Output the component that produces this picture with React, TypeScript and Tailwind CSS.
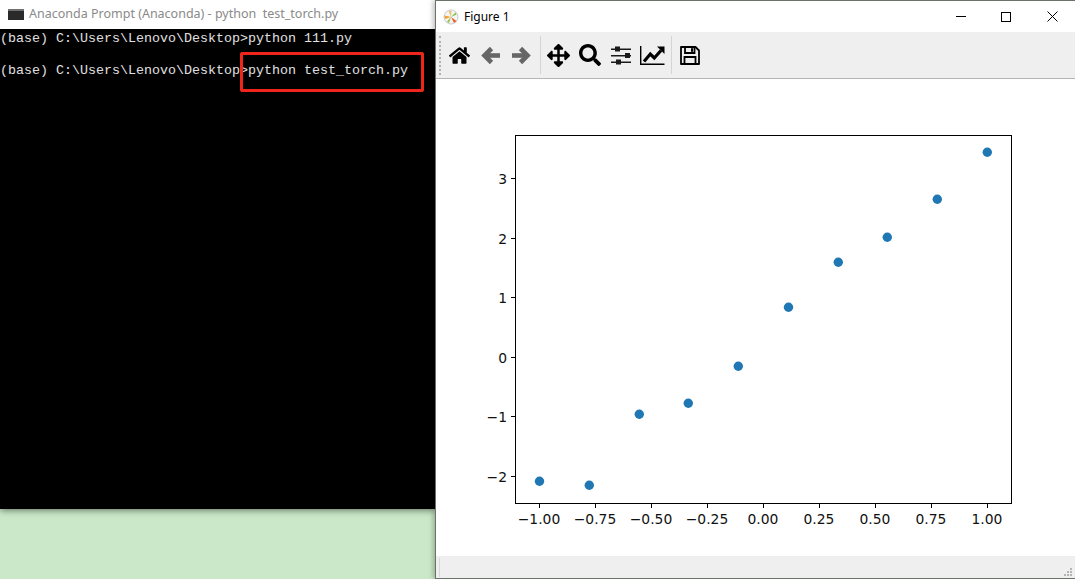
import { FaHome, FaArrowsAlt, FaSearch } from "react-icons/fa";

const xTicks = [
  { x: 539, label: "−1.00" },
  { x: 595, label: "−0.75" },
  { x: 651, label: "−0.50" },
  { x: 707, label: "−0.25" },
  { x: 763, label: "0.00" },
  { x: 819, label: "0.25" },
  { x: 875, label: "0.50" },
  { x: 931, label: "0.75" },
  { x: 987, label: "1.00" },
];

const yTicks = [
  { y: 178, label: "3" },
  { y: 238, label: "2" },
  { y: 297, label: "1" },
  { y: 357, label: "0" },
  { y: 416, label: "−1" },
  { y: 476, label: "−2" },
];

const points = [
  [539.5, 481.3],
  [589.3, 485.3],
  [639.3, 414.3],
  [688.3, 403.3],
  [738.3, 366.3],
  [788.5, 307.3],
  [838.3, 262.3],
  [887.3, 237.3],
  [937.3, 199.3],
  [987.3, 152.3],
];

function Plot() {
  // viewBox uses page coordinates so ticks read the same as the screenshot
  return (
    <svg width="639" height="477" viewBox="436 79 639 477" className="block">
      <rect x="515.5" y="135.5" width="496" height="368" fill="none" stroke="#000" strokeWidth="1" />
      {xTicks.map((t) => (
        <g key={t.label}>
          <line x1={t.x + 0.5} x2={t.x + 0.5} y1="503.5" y2="508" stroke="#000" />
          <text x={t.x} y="524" textAnchor="middle" fontSize="13.89" fontFamily="'DejaVu Sans', sans-serif" fill="#111">
            {t.label}
          </text>
        </g>
      ))}
      {yTicks.map((t) => (
        <g key={t.label}>
          <line x1="511" x2="515.5" y1={t.y + 0.5} y2={t.y + 0.5} stroke="#000" />
          <text x="507" y={t.y + 5.5} textAnchor="end" fontSize="13.89" fontFamily="'DejaVu Sans', sans-serif" fill="#111">
            {t.label}
          </text>
        </g>
      ))}
      {points.map(([x, y]) => (
        <circle key={x} cx={x} cy={y} r="4.7" fill="#1f77b4" />
      ))}
    </svg>
  );
}

function MplLogo() {
  return (
    <svg width="16" height="16" viewBox="0 0 16 16">
      <circle cx="8" cy="8" r="7" fill="#f4f4f4" stroke="#c9c9c9" />
      <path d="M8 8 L1.5 6.5 L2 10 Z" fill="#f2a02c" />
      <path d="M8 8 L5.5 2 L8.5 2 Z" fill="#e9c46a" />
      <path d="M8 8 L13.5 12 L11 14 Z" fill="#e8612a" />
      <path d="M8 8 L12.5 3.5 L13.5 5.5 Z" fill="#7cbf42" />
      <path d="M8 8 L6 14 L4 12.5 Z" fill="#9bbf4a" />
    </svg>
  );
}

function ArrowIcon({ flip }: { flip?: boolean }) {
  return (
    <svg width="20" height="19" viewBox="0 0 20 19" fill="none" stroke="#666" strokeWidth="4.6" className={flip ? "-scale-x-100" : ""}>
      <path d="M10.5 2.5 L3.5 9.5 L10.5 16.5" />
      <path d="M4 9.5 H19" />
    </svg>
  );
}

function SlidersIcon() {
  return (
    <svg width="20" height="19" viewBox="0 0 20 19" fill="#1a1a1a">
      <rect x="0" y="2.5" width="20" height="1.5" />
      <rect x="4" y="0.5" width="5" height="5" />
      <rect x="0" y="9" width="20" height="1.5" />
      <rect x="14" y="7" width="5" height="5" />
      <rect x="0" y="15.5" width="20" height="1.5" />
      <rect x="5" y="13.5" width="5" height="5" />
    </svg>
  );
}

function ChartIcon() {
  return (
    <svg width="25" height="19" viewBox="0 0 25 19" fill="none">
      <path d="M0.7 0 V18.2 H24.5" stroke="#000" strokeWidth="1.4" />
      <path d="M4 15.5 L10.3 8 L14.3 12 L21 4.5" stroke="#000" strokeWidth="3.2" />
      <path d="M17 0.5 H24.5 V8 Z" fill="#000" />
    </svg>
  );
}

function SaveIcon() {
  return (
    <svg width="20" height="19" viewBox="0 0 20 19" fill="none" stroke="#000" strokeWidth="1.8">
      <path d="M1 1 H15.5 L19 4.5 V18 H1 Z" strokeLinejoin="round" />
      <path d="M5 1 V7 H14.5 V1" />
      <path d="M4.5 18 V11 H15.5 V18" />
      <rect x="11" y="2.2" width="2" height="3.6" fill="#000" stroke="none" />
    </svg>
  );
}

function Separator() {
  return <div className="h-[38px] w-px bg-[#d4d4d4]" />;
}

export default function App() {
  return (
    <div className="relative h-[579px] w-[1075px] overflow-hidden bg-[#cbe9c9]">
      {/* console window */}
      <div className="absolute left-0 top-0 flex h-[509px] w-[436px] flex-col bg-black shadow-[0_1px_7px_rgba(0,0,0,0.55)]">
        <div className="flex h-[29px] shrink-0 items-center gap-[5px] bg-white pl-[8px]">
          <div className="h-[11px] w-[16px] border-t-2 border-[#707070] bg-[#2a2a2a]" />
          <span className="whitespace-pre font-['Noto_Sans',sans-serif] text-[12.5px] text-[#8a8a8a]">
            Anaconda Prompt (Anaconda) - python  test_torch.py
          </span>
        </div>
        <div className="whitespace-pre pt-[2px] font-['Liberation_Mono',monospace] text-[13.33px] leading-4 text-[#e0e0e0]">
          <div>{"(base) C:\\Users\\Lenovo\\Desktop>python 111.py"}</div>
          <div>{" "}</div>
          <div>{"(base) C:\\Users\\Lenovo\\Desktop>python test_torch.py"}</div>
        </div>
      </div>

      {/* annotation box */}
      <div className="absolute left-[240px] top-[52px] h-[40px] w-[184px] rounded-[2px] border-[3px] border-[#f0261c]" />

      {/* figure window */}
      <div className="absolute left-[435px] top-0 flex h-[579px] w-[640px] flex-col border-b border-l border-t border-[#6a726a] bg-white shadow-[-2px_0_5px_rgba(0,0,0,0.25)]">
        <div className="flex h-[31px] shrink-0 items-center bg-white pl-[7px]">
          <MplLogo />
          <span className="ml-[5px] font-['Noto_Sans',sans-serif] text-[12px] text-black">Figure 1</span>
          <div className="ml-auto flex items-center">
            <div className="mr-[35px] h-px w-[10px] bg-black" />
            <div className="mr-[36px] h-[10px] w-[10px] border border-black" />
            <svg width="11" height="11" viewBox="0 0 11 11" className="mr-[17px]" stroke="#000" strokeWidth="1">
              <path d="M0.5 0.5 L10.5 10.5 M10.5 0.5 L0.5 10.5" />
            </svg>
          </div>
        </div>

        <div className="flex h-[47px] shrink-0 items-center border-b border-[#b5b5b5] bg-[#efefef]">
          <div className="ml-[3px] h-[39px] w-[3px] border-l-2 border-dotted border-[#b0b0b0]" />
          <FaHome className="ml-[7px] text-black" size={21} />
          <div className="ml-[11px]">
            <ArrowIcon />
          </div>
          <div className="ml-[10px]">
            <ArrowIcon flip />
          </div>
          <div className="ml-[9px]">
            <Separator />
          </div>
          <FaArrowsAlt className="ml-[6px] text-black" size={23} />
          <FaSearch className="ml-[9px] text-black" size={22} />
          <div className="ml-[10px]">
            <SlidersIcon />
          </div>
          <div className="ml-[9px]">
            <ChartIcon />
          </div>
          <div className="ml-[6px]">
            <Separator />
          </div>
          <div className="ml-[8px]">
            <SaveIcon />
          </div>
        </div>

        <div className="min-h-0 flex-1 bg-white">
          <Plot />
        </div>

        <div className="relative h-[22px] shrink-0 bg-[#efefef]">
          <div className="absolute left-[3px] top-[2px] h-[19px] w-px bg-[#d8d8d8]" />
          <svg width="8" height="8" viewBox="0 0 8 8" fill="#b5b5b5" className="absolute bottom-[2px] right-[3px]">
            <rect x="6" y="0" width="2" height="2" />
            <rect x="3" y="3" width="2" height="2" />
            <rect x="6" y="3" width="2" height="2" />
            <rect x="0" y="6" width="2" height="2" />
            <rect x="3" y="6" width="2" height="2" />
            <rect x="6" y="6" width="2" height="2" />
          </svg>
        </div>
      </div>
    </div>
  );
}
